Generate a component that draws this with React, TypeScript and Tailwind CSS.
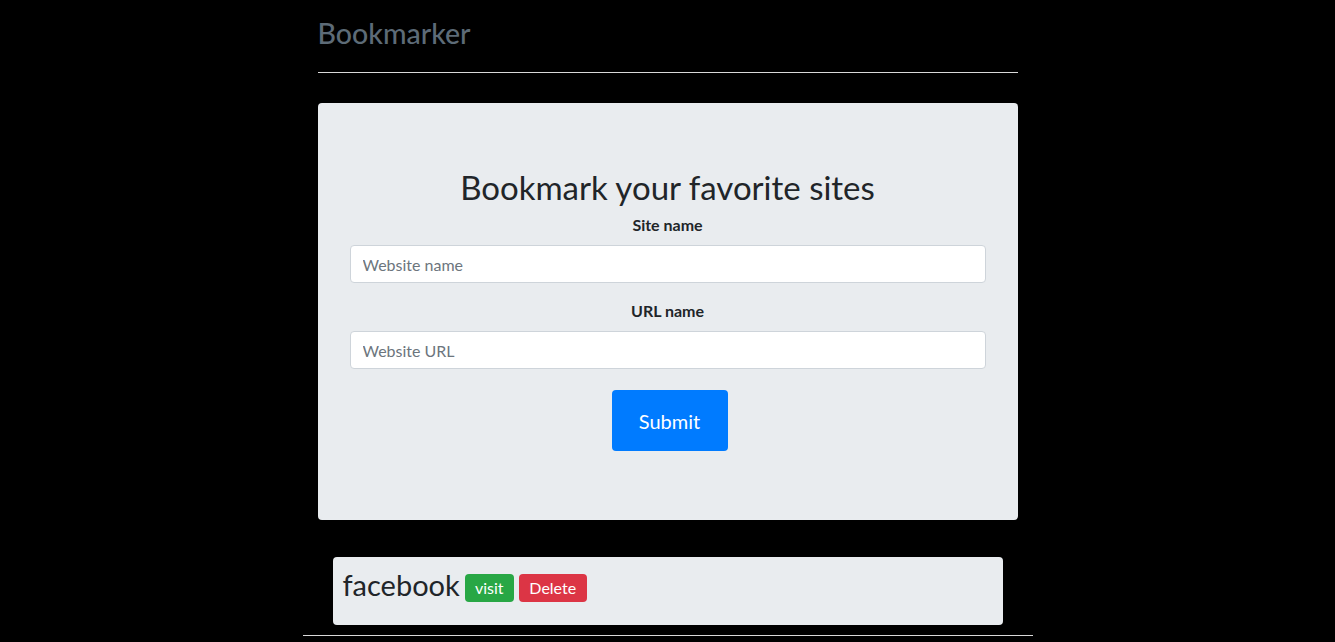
import React from "react";

export default function App() {
  return (
    <div
      className="min-h-[642px] bg-black"
      style={{ fontFamily: "Lato, 'Noto Sans', sans-serif" }}
    >
      <div className="mx-auto w-[700px]">
        <h3 className="pt-[16px] text-[28.5px] font-medium leading-[34px] text-[#5d6b77]">
          Bookmarker
        </h3>
        <hr className="mt-[22px] border-0 border-t border-[#d9d9d9]" />
        <div className="mt-[30px] flex flex-col items-center rounded-[4px] bg-[#e9ecef] px-[32px] pb-[69px] pt-[65px]">
          <h2 className="text-[33px] leading-[38px] text-[#212529]">
            Bookmark your favorite sites
          </h2>
          <div className="mt-[7px] flex w-full flex-col items-center">
            <label className="text-[16px] font-bold leading-[24px] text-[#212529]">
              Site name
            </label>
            <input
              className="mt-[8px] h-[38px] w-full rounded-[4px] border border-[#ced4da] bg-white px-[12px] text-[16px] text-[#495057] placeholder:text-[#6c757d] outline-none"
              placeholder="Website name"
            />
          </div>
          <div className="mt-[16px] flex w-full flex-col items-center">
            <label className="text-[16px] font-bold leading-[24px] text-[#212529]">
              URL name
            </label>
            <input
              className="mt-[8px] h-[38px] w-full rounded-[4px] border border-[#ced4da] bg-white px-[12px] text-[16px] text-[#495057] placeholder:text-[#6c757d] outline-none"
              placeholder="Website URL"
            />
          </div>
          <button className="ml-[4px] mt-[21px] h-[61px] w-[116px] rounded-[4px] bg-[#007bff] text-[20px] text-white">
            Submit
          </button>
        </div>
      </div>
      <div className="mx-auto mt-[37px] w-[730px]">
        <div className="mx-[30px] flex h-[68px] items-start rounded-[4px] bg-[#e9ecef] px-[10px] pt-[11px]">
          <h3 className="text-[29px] leading-[34px] text-[#212529]">facebook</h3>
          <button className="ml-[5px] mt-[6px] h-[28px] w-[49px] rounded-[4px] bg-[#28a745] text-[16px] text-white">
            visit
          </button>
          <button className="ml-[5px] mt-[6px] h-[28px] w-[68px] rounded-[4px] bg-[#dc3545] text-[16px] text-white">
            Delete
          </button>
        </div>
        <hr className="mt-[10px] border-0 border-t border-[#d9d9d9]" />
      </div>
    </div>
  );
}
